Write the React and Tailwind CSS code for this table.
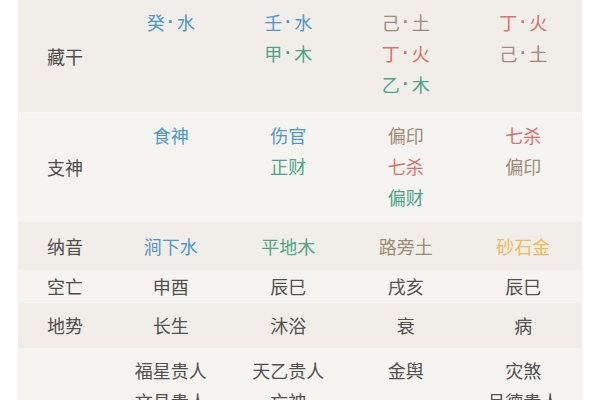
import React from "react";

const C = {
  blue: "text-[#4f96cb]",
  green: "text-[#4ea487]",
  brown: "text-[#a08b76]",
  red: "text-[#d6736e]",
  gold: "text-[#efbb5c]",
  gray: "text-[#505050]",
};

const font = { fontFamily: '"Noto Sans CJK SC", "Noto Sans", sans-serif' };

function Txt({ t }) {
  if (!t.includes("·")) return t;
  const [a, b] = t.split("·");
  return (
    <span className="flex items-center">
      <span>{a}</span>
      <span className="mx-[3px] font-['Liberation_Sans',sans-serif] font-bold">·</span>
      <span>{b}</span>
    </span>
  );
}

function Row({ label, bg, h, top, children }) {
  return (
    <div className={`grid grid-cols-[94px_1fr_1fr_1fr_1fr] ${bg} ${h}`}>
      <div className="flex items-center justify-center text-[#4d4d4d]">{label}</div>
      {children.map((col, i) => (
        <div
          key={i}
          className={`flex flex-col items-center ${top ? "justify-start pt-[7px]" : "justify-center"}`}
        >
          {col.map(([t, c], j) => (
            <div key={j} className={`${c} leading-[31px]`}>
              <Txt t={t} />
            </div>
          ))}
        </div>
      ))}
    </div>
  );
}

export default function App() {
  return (
    <div className="w-[600px] h-[400px] bg-white overflow-hidden text-[18px]" style={font}>
      <div className="mx-[18px] flex flex-col">
        <Row label="藏干" bg="bg-[#f1eee9]" h="h-[112px]" top>
          {[
            [["癸·水", C.blue]],
            [["壬·水", C.blue], ["甲·木", C.green]],
            [["己·土", C.brown], ["丁·火", C.red], ["乙·木", C.green]],
            [["丁·火", C.red], ["己·土", C.brown]],
          ]}
        </Row>
        <div className="h-px bg-[#f8f7f5]" />
        <Row label="支神" bg="bg-[#f5f4f1]" h="h-[109px]" top>
          {[
            [["食神", C.blue]],
            [["伤官", C.blue], ["正财", C.green]],
            [["偏印", C.brown], ["七杀", C.red], ["偏财", C.green]],
            [["七杀", C.red], ["偏印", C.brown]],
          ]}
        </Row>
        <Row label="纳音" bg="bg-[#f1eee9]" h="h-[48px]">
          {[
            [["涧下水", C.blue]],
            [["平地木", C.green]],
            [["路旁土", C.brown]],
            [["砂石金", C.gold]],
          ]}
        </Row>
        <Row label="空亡" bg="bg-[#f5f4f1]" h="h-[33px]">
          {[
            [["申酉", C.gray]],
            [["辰巳", C.gray]],
            [["戌亥", C.gray]],
            [["辰巳", C.gray]],
          ]}
        </Row>
        <Row label="地势" bg="bg-[#f1eee9]" h="h-[45px]">
          {[
            [["长生", C.gray]],
            [["沐浴", C.gray]],
            [["衰", C.gray]],
            [["病", C.gray]],
          ]}
        </Row>
        <Row label="神煞" bg="bg-[#f5f4f1]" h="h-[140px]" top>
          {[
            [["福星贵人", C.gray], ["文昌贵人", C.gray]],
            [["天乙贵人", C.gray], ["亡神", C.gray]],
            [["金舆", C.gray]],
            [["灾煞", C.gray], ["月德贵人", C.gray]],
          ]}
        </Row>
      </div>
    </div>
  );
}
